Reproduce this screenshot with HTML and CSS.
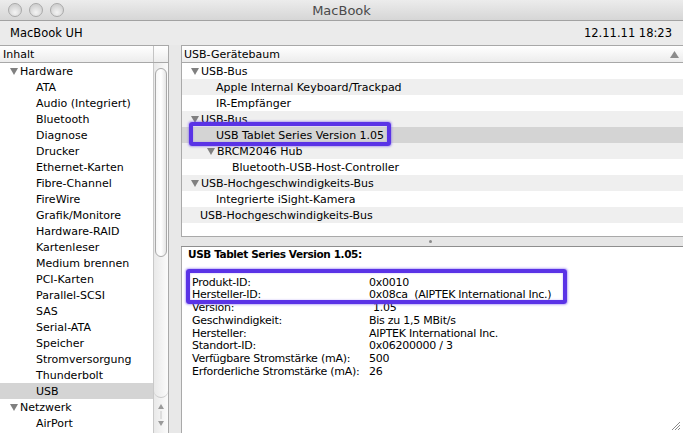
FILE: index.html
```html
<!DOCTYPE html>
<html lang="de">
<head>
<meta charset="utf-8">
<title>MacBook</title>
<link rel="stylesheet" href="styles.css">
</head>
<body>
<div class="window">
  <div class="titlebar">
    <div class="lights"><span class="light"></span><span class="light"></span><span class="light"></span></div>
    <div class="title">MacBook</div>
  </div>
  <div class="toolbar"><span>MacBook UH</span><span>12.11.11 18:23</span></div>
  <div class="main">
    <div class="sidebar">
      <div class="colhead"><span class="colname">Inhalt</span><span class="colcorner"></span></div>
      <div class="sidebody">
        <ul class="list">
          <li class="row l0"><svg class="tri" width="8" height="7" viewBox="0 0 8 7"><path d="M0 0H8L4 7Z"/></svg>Hardware</li>
          <li class="row l1">ATA</li>
          <li class="row l1">Audio (Integriert)</li>
          <li class="row l1">Bluetooth</li>
          <li class="row l1">Diagnose</li>
          <li class="row l1">Drucker</li>
          <li class="row l1">Ethernet-Karten</li>
          <li class="row l1">Fibre-Channel</li>
          <li class="row l1">FireWire</li>
          <li class="row l1">Grafik/Monitore</li>
          <li class="row l1">Hardware-RAID</li>
          <li class="row l1">Kartenleser</li>
          <li class="row l1">Medium brennen</li>
          <li class="row l1">PCI-Karten</li>
          <li class="row l1">Parallel-SCSI</li>
          <li class="row l1">SAS</li>
          <li class="row l1">Serial-ATA</li>
          <li class="row l1">Speicher</li>
          <li class="row l1">Stromversorgung</li>
          <li class="row l1">Thunderbolt</li>
          <li class="row l1 sel">USB</li>
          <li class="row l0"><svg class="tri" width="8" height="7" viewBox="0 0 8 7"><path d="M0 0H8L4 7Z"/></svg>Netzwerk</li>
          <li class="row l1">AirPort</li>
        </ul>
        <div class="vscroll">
          <div class="track"><div class="thumb"></div></div>
          <div class="arrows">
            <svg width="14" height="34" viewBox="0 0 14 34"><path d="M7 6L10 11H4Z" fill="#9a9a9a"/><line x1="7" y1="13" x2="7" y2="21" stroke="#c8c8c8"/><path d="M7 28L10 23H4Z" fill="#9a9a9a"/></svg>
          </div>
        </div>
      </div>
    </div>
    <div class="right">
      <div class="treepane">
        <div class="colhead wide"><span class="colname">USB-Gerätebaum</span><svg class="sort" width="9" height="7" viewBox="0 0 9 7"><path d="M4.5 0L9 7H0Z"/></svg></div>
        <ul class="tree">
          <li class="row t0"><svg class="tri" width="8" height="7" viewBox="0 0 8 7"><path d="M0 0H8L4 7Z"/></svg>USB-Bus</li>
          <li class="row t1 alt">Apple Internal Keyboard/Trackpad</li>
          <li class="row t1">IR-Empfänger</li>
          <li class="row t0 alt"><svg class="tri" width="8" height="7" viewBox="0 0 8 7"><path d="M0 0H8L4 7Z"/></svg>USB-Bus</li>
          <li class="row t1 sel">USB Tablet Series Version 1.05</li>
          <li class="row t1 alt"><svg class="tri" width="8" height="7" viewBox="0 0 8 7"><path d="M0 0H8L4 7Z"/></svg>BRCM2046 Hub</li>
          <li class="row t2">Bluetooth-USB-Host-Controller</li>
          <li class="row t0 alt"><svg class="tri" width="8" height="7" viewBox="0 0 8 7"><path d="M0 0H8L4 7Z"/></svg>USB-Hochgeschwindigkeits-Bus</li>
          <li class="row t1">Integrierte iSight-Kamera</li>
          <li class="row t0 alt">USB-Hochgeschwindigkeits-Bus</li>
          <li class="row t0"></li>
        </ul>
      </div>
      <div class="splitter"><span class="dimple"></span></div>
      <div class="detail">
        <div class="dtitle">USB Tablet Series Version 1.05:</div>
        <dl class="props">
          <dt>Produkt-ID:</dt><dd>0x0010</dd>
          <dt>Hersteller-ID:</dt><dd>0x08ca&nbsp; (AIPTEK International Inc.)</dd>
          <dt>Version:</dt><dd class="ver">1.05</dd>
          <dt>Geschwindigkeit:</dt><dd>Bis zu 1,5 MBit/s</dd>
          <dt>Hersteller:</dt><dd>AIPTEK International Inc.</dd>
          <dt>Standort-ID:</dt><dd>0x06200000 / 3</dd>
          <dt>Verfügbare Stromstärke (mA):</dt><dd>500</dd>
          <dt>Erforderliche Stromstärke (mA):</dt><dd>26</dd>
        </dl>
        <svg class="grip" width="10" height="10" viewBox="0 0 10 10"><path d="M9 1L1 9M9 4L4 9M9 7L7 9" stroke="#8a8a8a" stroke-width="1"/></svg>
      </div>
    </div>
  </div>
  <div class="mark mark1"></div>
  <div class="mark mark2"></div>
</div>
</body>
</html>
```
FILE: styles.css
```css
* { box-sizing: border-box; }
html, body { margin: 0; padding: 0; }
body {
  width: 683px;
  height: 433px;
  overflow: hidden;
  background: #e8e8e8;
  font-family: "DejaVu Sans", "Liberation Sans", sans-serif;
  font-size: 11px;
  color: #000;
}
ul, dl, dd { margin: 0; padding: 0; list-style: none; }
.window {
  position: relative;
  width: 683px;
  height: 433px;
  display: flex;
  flex-direction: column;
}
.titlebar {
  height: 21px;
  flex: none;
  display: flex;
  align-items: center;
  position: relative;
  background: linear-gradient(#ececec, #d6d6d6);
  border-bottom: 1px solid #a2a2a2;
}
.lights {
  display: flex;
  gap: 7px;
  padding-left: 8px;
}
.light {
  width: 14px;
  height: 14px;
  border-radius: 50%;
  border: 1px solid #a9a9a9;
  background: radial-gradient(circle at 50% 70%, #f4f4f4, #d2d2d2 70%);
}
.title {
  position: absolute;
  left: 0;
  right: 0;
  text-align: center;
  font-size: 13px;
  color: #4a4a4a;
}
.toolbar {
  height: 24px;
  flex: none;
  display: flex;
  justify-content: space-between;
  align-items: center;
  padding: 0 11px 0 10px;
  font-size: 11.5px;
  background: #ebebeb;
}
.main {
  flex: 1;
  display: flex;
  gap: 12px;
  min-height: 0;
}
.sidebar {
  width: 169px;
  flex: none;
  display: flex;
  flex-direction: column;
  background: #fff;
  border-right: 1px solid #a9a9a9;
}
.colhead {
  height: 18px;
  flex: none;
  display: flex;
  align-items: center;
  border-top: 1px solid #a8a8a8;
  border-bottom: 1px solid #a8a8a8;
  background: linear-gradient(#ffffff, #ececec);
}
.colname {
  flex: 1;
  padding: 1px 0 0 3px;
  height: 100%;
  line-height: 16px;
}
.colcorner {
  width: 15px;
  height: 100%;
  border-left: 1px solid #c4c4c4;
}
.sidebody {
  flex: 1;
  display: flex;
  min-height: 0;
}
.list { flex: 1; overflow: hidden; }
.row {
  height: 16px;
  line-height: 15px;
  padding-top: 1px;
  white-space: nowrap;
  display: flex;
  align-items: center;
}
.tri { fill: #808080; flex: none; margin-right: 2px; }
.l0 { padding-left: 10px; }
.l1 { padding-left: 36px; }
.row.sel { background: #d4d4d4; }
.vscroll {
  width: 15px;
  flex: none;
  display: flex;
  flex-direction: column;
  border-left: 1px solid #c9c9c9;
  background: linear-gradient(90deg, #e9e9e9, #fbfbfb);
}
.track {
  flex: 1;
  padding: 5px 1px 0;
  border-bottom: 1px solid #c9c9c9;
  border-radius: 0 0 7px 7px;
}
.thumb {
  height: 189px;
  border: 1px solid #a9a9a9;
  border-radius: 7px;
  background: linear-gradient(90deg, #f6f6f6, #ffffff 50%, #e6e6e6);
}
.arrows { height: 35px; flex: none; }
.right {
  flex: 1;
  display: flex;
  flex-direction: column;
  min-width: 0;
}
.treepane {
  height: 192px;
  flex: none;
  background: #fff;
  border-left: 1px solid #a9a9a9;
  border-bottom: 1px solid #a9a9a9;
  display: flex;
  flex-direction: column;
}
.colhead.wide { position: relative; }
.colhead.wide .colname { padding-left: 2px; }
.sort { fill: #8c8c8c; margin-right: 4px; }
.tree { flex: 1; overflow: hidden; }
.row.alt { background: #efefef; }
.t0 { padding-left: 9px; }
.t0:not(:has(.tri)) { padding-left: 18px; }
.t1 { padding-left: 34px; }
.t1:has(.tri) { padding-left: 25px; }
.t2 { padding-left: 50px; }
.splitter {
  height: 10px;
  flex: none;
  position: relative;
  background: #e6e6e6;
  border-bottom: 1px solid #8e8e8e;
}
.dimple {
  position: absolute;
  left: 248px;
  top: 3px;
  width: 3px;
  height: 3px;
  border-radius: 50%;
  background: #8a8a8a;
}
.detail {
  flex: 1;
  position: relative;
  background: #fff;
  border-left: 1px solid #a9a9a9;
  padding: 0 0 0 6px;
}
.dtitle {
  font-weight: bold;
  font-size: 10.5px;
  letter-spacing: -0.4px;
  line-height: 15px;
}
.props {
  display: grid;
  grid-template-columns: 177px 1fr;
  margin: 14.6px 0 0 4px;
  line-height: 12.75px;
  letter-spacing: -0.25px;
}
.props dt, .props dd { white-space: nowrap; }
.props .ver { padding-left: 4px; }
.grip { position: absolute; right: 2px; bottom: 2px; }
.mark {
  position: absolute;
  border: 4px solid #5a33e6;
  border-radius: 3px;
  box-shadow: 0 0 2px 1px rgba(110, 80, 240, 0.45), inset 0 0 2px rgba(110, 80, 240, 0.45);
}
.mark1 { left: 189px; top: 122px; width: 202px; height: 24px; }
.mark2 { left: 186px; top: 269px; width: 381px; height: 35px; }
```
